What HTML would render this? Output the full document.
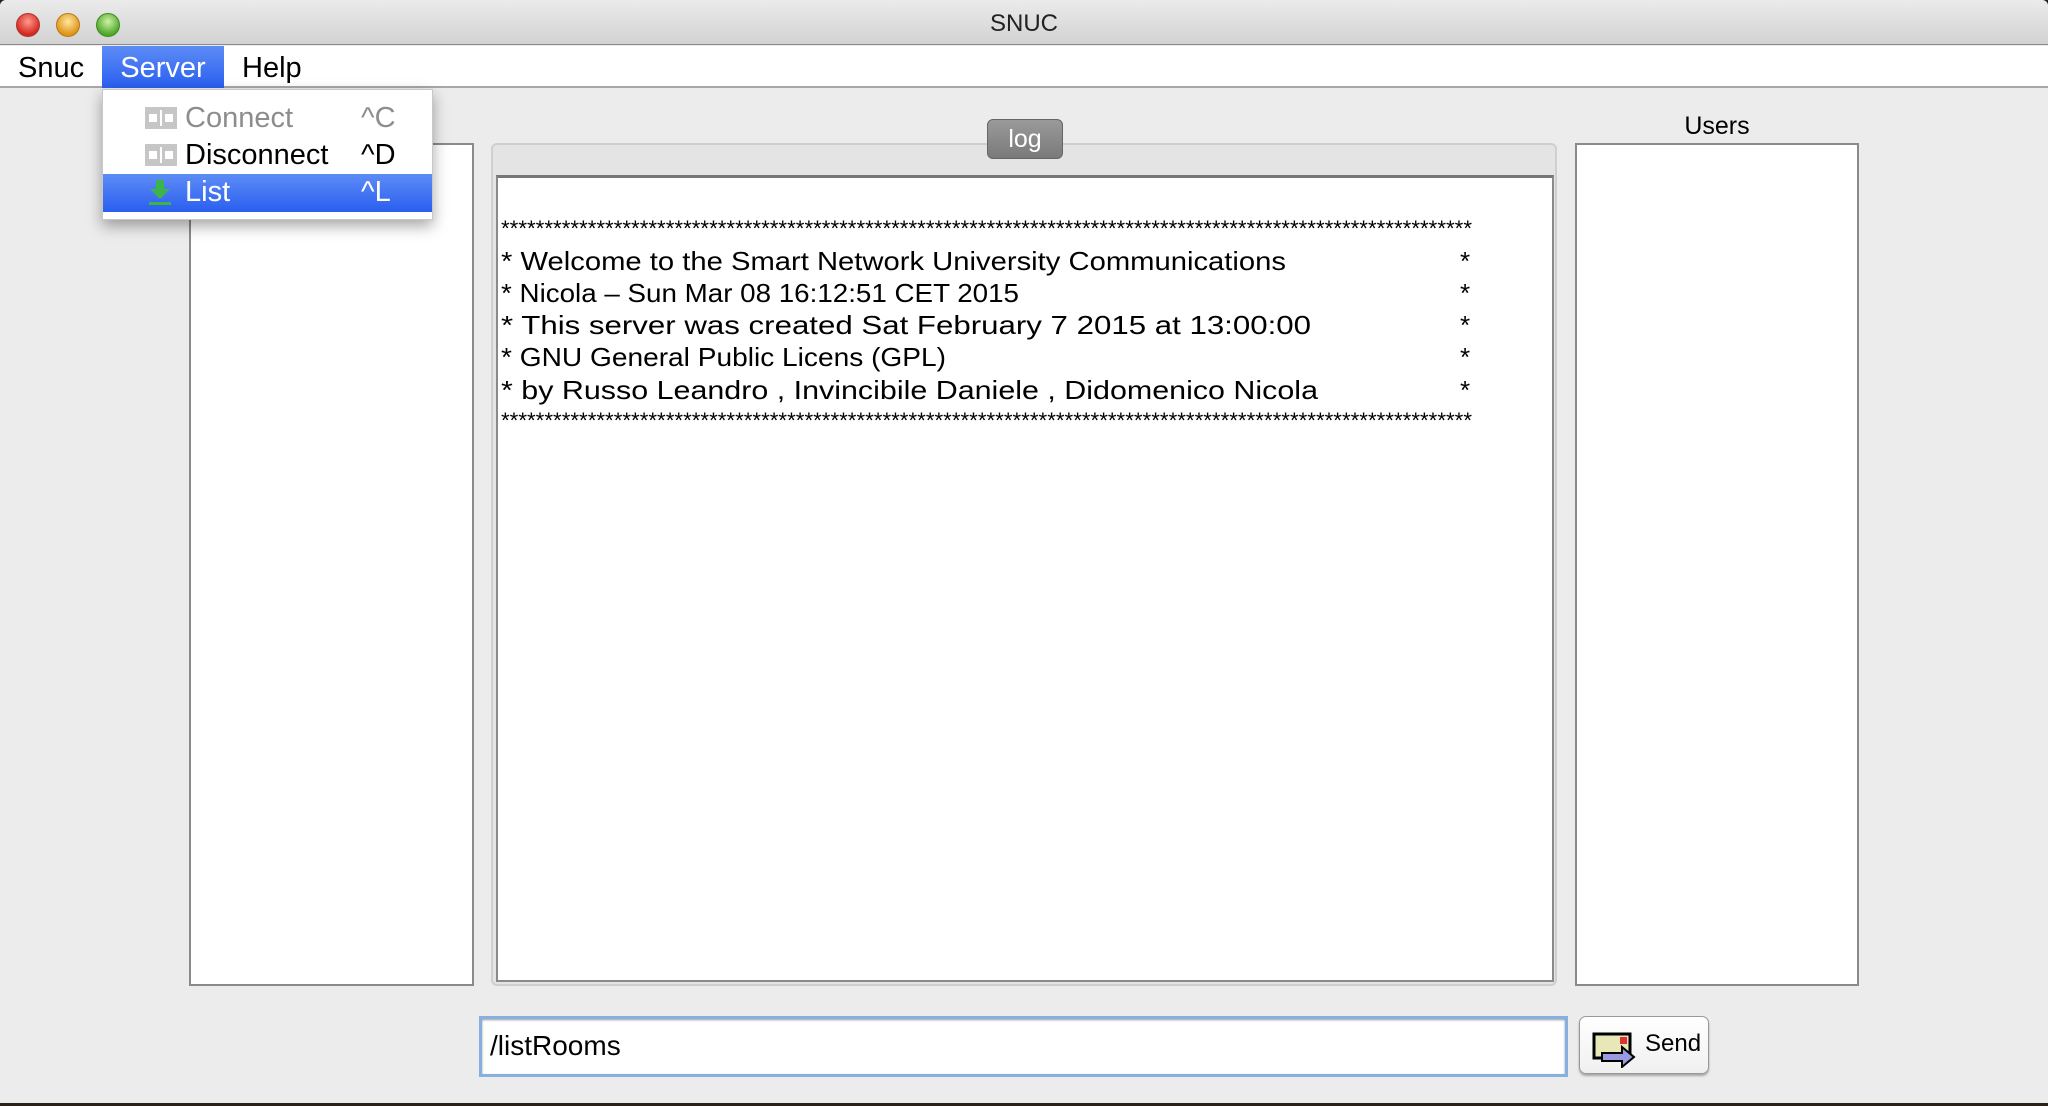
<!DOCTYPE html>
<html><head><meta charset="utf-8"><style>
*{margin:0;padding:0;box-sizing:border-box}
body{width:2048px;height:1106px;background:#2a2118;position:relative;overflow:hidden;font-family:"Liberation Sans",sans-serif}
.win{position:absolute;left:0;top:0;width:2048px;height:1103px;background:#ececec;border-radius:6px 6px 0 0;overflow:hidden}
.title{position:absolute;left:0;top:0;width:2048px;height:45px;background:linear-gradient(#ebebeb,#d2d2d2);border-bottom:1px solid #8a8a8a;text-align:center;font-size:24px;line-height:47px;color:#222}
.dot{position:absolute;top:13px;width:24px;height:24px;border-radius:50%}
.menubar{position:absolute;left:0;top:46px;width:2048px;height:42px;background:#fff;border-bottom:2px solid #a8a8a8}
.mi{position:absolute;top:0;height:42px;line-height:44px;font-size:29px;color:#000}
.box{position:absolute;background:#fff;border:2px solid #8a8a8a}
.popup{position:absolute;left:102px;top:89px;width:331px;height:131px;background:#fff;border:1px solid #c8c8c8;box-shadow:0 6px 14px rgba(0,0,0,.35)}
.pi{position:absolute;left:0;width:329px;height:36px;font-size:29px;line-height:36px}
.ico{position:absolute;left:42px;top:7px}
</style></head><body>
<div class="win">
<div class="title">SNUC
<div class="dot" style="left:16px;background:radial-gradient(circle at 50% 35%,#ff9a8f,#d5281e 70%);border:1px solid #a33"></div>
<div class="dot" style="left:56px;background:radial-gradient(circle at 50% 35%,#ffe7a0,#e09418 70%);border:1px solid #b77a16"></div>
<div class="dot" style="left:96px;background:radial-gradient(circle at 50% 35%,#cff2a8,#4fa82a 70%);border:1px solid #3f8a22"></div>
</div>
<div class="menubar">
<div class="mi" style="left:18px">Snuc</div>
<div class="mi" style="left:102px;width:122px;background:linear-gradient(#5d8cf6,#2a5ff0);color:#fff;text-align:center">Server</div>
<div class="mi" style="left:242px">Help</div>
</div>

<div class="box" style="left:189px;top:143px;width:285px;height:843px"></div>

<div style="position:absolute;left:491px;top:143px;width:1066px;height:843px;background:#e4e4e4;border:2px solid #cfcfcf;border-radius:6px"></div>
<div class="box" style="left:496px;top:175px;width:1058px;height:807px;border-color:#8a8a8a;border-top:3px solid #777"></div>
<div style="position:absolute;left:987px;top:119px;width:76px;height:40px;background:linear-gradient(#9a9a9a,#7a7a7a);border:1px solid #666;border-radius:6px;color:#fff;font-size:25px;text-align:center;line-height:38px">log</div>

<svg style="position:absolute;left:0;top:0" width="2048" height="1106">
<g font-family="Liberation Sans, sans-serif" font-size="26" fill="#000" style="white-space:pre" xml:space="preserve">
<text x="501" y="236" textLength="971" lengthAdjust="spacingAndGlyphs" font-size="22">****************************************************************************************************************</text>
<text x="501" y="270" textLength="785" lengthAdjust="spacingAndGlyphs">* Welcome to the Smart  Network  University  Communications</text>
<text x="501" y="302" textLength="518" lengthAdjust="spacingAndGlyphs">* Nicola – Sun Mar 08 16:12:51 CET 2015</text>
<text x="501" y="334" textLength="810" lengthAdjust="spacingAndGlyphs">* This  server  was   created   Sat  February  7  2015  at  13:00:00</text>
<text x="501" y="366" textLength="445" lengthAdjust="spacingAndGlyphs">* GNU General Public Licens     (GPL)</text>
<text x="501" y="399" textLength="817" lengthAdjust="spacingAndGlyphs">* by   Russo Leandro  ,  Invincibile  Daniele ,  Didomenico  Nicola</text>
<text x="1460" y="270">*</text><text x="1460" y="302">*</text><text x="1460" y="334">*</text><text x="1460" y="366">*</text><text x="1460" y="399">*</text>
<text x="501" y="428" textLength="971" lengthAdjust="spacingAndGlyphs" font-size="22">****************************************************************************************************************</text>
</g></svg>

<div style="position:absolute;left:1575px;top:112px;width:284px;text-align:center;font-size:25px">Users</div>
<div class="box" style="left:1575px;top:143px;width:284px;height:843px"></div>

<div style="position:absolute;left:479px;top:1016px;width:1089px;height:61px;background:#fff;border:3px solid #86b0e0;box-shadow:inset 0 1px 2px #999"></div>
<div style="position:absolute;left:490px;top:1030px;font-size:28px">/listRooms</div>
<div style="position:absolute;left:1579px;top:1016px;width:130px;height:58px;background:linear-gradient(#fff,#f0f0f0);border:1px solid #999;border-radius:7px;box-shadow:0 2px 2px rgba(0,0,0,.3)">
<svg style="position:absolute;left:12px;top:15px" width="46" height="36"><rect x="2" y="2" width="36" height="24" fill="#e7e7b8" stroke="#000" stroke-width="3"/><rect x="28" y="5" width="7" height="7" fill="#d33"/><path d="M10 27h20v-6l12 10-12 10v-6H10z" fill="#9a9ae0" stroke="#000" stroke-width="2" transform="translate(0,-6)"/></svg>
<div style="position:absolute;left:65px;top:13px;font-size:24px">Send</div>
</div>

<div class="popup">
<div class="pi" style="top:10px;color:#8d8d8d"><svg class="ico" width="32" height="22"><rect width="32" height="22" fill="#c6c6c6"/><path d="M4 7h8v8H4zM20 7h8v8h-8z" fill="#fff"/><rect x="15" y="3" width="2" height="16" fill="#fff"/></svg><span style="position:absolute;left:82px">Connect</span><span style="position:absolute;left:258px">^C</span></div>
<div class="pi" style="top:47px;color:#000"><svg class="ico" width="32" height="22"><rect width="32" height="22" fill="#c6c6c6"/><path d="M4 7h8v8H4zM20 7h8v8h-8z" fill="#fff"/><rect x="15" y="3" width="2" height="16" fill="#fff"/></svg><span style="position:absolute;left:82px">Disconnect</span><span style="position:absolute;left:258px">^D</span></div>
<div class="pi" style="top:84px;height:38px;background:linear-gradient(#5d8cf6,#2a5ff0);color:#fff"><svg style="position:absolute;left:46px;top:6px" width="22" height="26"><path d="M7 0h8v9h6L11 19 1 9h6z" fill="#3bb54a"/><rect x="0" y="22" width="22" height="3" fill="#3bb54a"/></svg><span style="position:absolute;left:82px">List</span><span style="position:absolute;left:258px">^L</span></div>
</div>
</div>
</body></html>
